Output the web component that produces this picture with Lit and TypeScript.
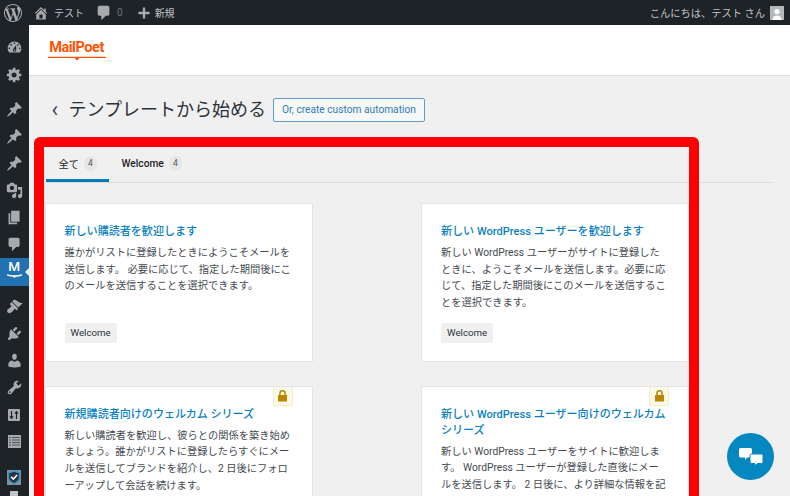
import { LitElement, html, css, svg } from "lit";
import { customElement } from "lit/decorators.js";

const P = {
  wp: "M20 10c0-5.51-4.49-10-10-10C4.48 0 0 4.49 0 10c0 5.52 4.48 10 10 10 5.51 0 10-4.48 10-10zM7.78 15.37L4.37 6.22c.55-.02 1.17-.08 1.17-.08.5-.06.44-1.13-.06-1.11 0 0-1.45.11-2.37.11-.18 0-.37 0-.58-.01C4.12 2.69 6.87 1.11 10 1.11c2.33 0 4.45.87 6.05 2.34-.68-.11-1.65.39-1.65 1.58 0 .74.45 1.36.9 2.1.35.61.55 1.36.55 2.46 0 1.49-1.4 5-1.4 5l-3.03-8.37c.54-.02.82-.17.82-.17.5-.05.44-1.25-.06-1.22 0 0-1.44.12-2.38.12-.87 0-2.33-.12-2.33-.12-.5-.03-.56 1.2-.06 1.22l.92.08 1.26 3.41zM17.41 10c.24-.64.74-1.87.43-4.25.7 1.29 1.05 2.71 1.05 4.25 0 3.29-1.73 6.24-4.4 7.78.97-2.59 1.94-5.2 2.92-7.78zM6.1 18.09C3.12 16.65 1.11 13.53 1.11 10c0-1.3.23-2.48.72-3.59C3.25 10.3 4.67 14.2 6.1 18.09zm4.03-6.63l2.58 6.98c-.86.29-1.76.45-2.71.45-.79 0-1.57-.11-2.29-.33.81-2.38 1.62-4.74 2.42-7.1z",
  home: "M16 8.5l1.53 1.53-1.06 1.06L10 4.62l-6.47 6.47-1.06-1.06L10 2.5l4 4v-2h2v4zm-6-2.46l6 5.99V18H4v-5.97zM12 17v-5H8v5h4z",
  comment: "M5 2h9c1.1 0 2 .9 2 2v7c0 1.1-.9 2-2 2h-2l-5 5v-5H5c-1.1 0-2-.9-2-2V4c0-1.1.9-2 2-2z",
  plus: "M17 8.5v3h-5.5V17h-3v-5.5H3v-3h5.5V3h3v5.5z",
  dash: "M3.76 16h12.48c1.1-1.37 1.76-3.11 1.76-5 0-4.42-3.58-8-8-8s-8 3.58-8 8c0 1.89.66 3.63 1.76 5zM10 4c.55 0 1 .45 1 1s-.45 1-1 1-1-.45-1-1 .45-1 1-1zM6 6c.55 0 1 .45 1 1s-.45 1-1 1-1-.45-1-1 .45-1 1-1zm8 0c.55 0 1 .45 1 1s-.45 1-1 1-1-.45-1-1 .45-1 1-1zm-5.37 5.55L12 7v6c0 1.1-.9 2-2 2s-2-.9-2-2c0-.57.24-1.08.63-1.45zM4 10c.55 0 1 .45 1 1s-.45 1-1 1-1-.45-1-1 .45-1 1-1zm12 0c.55 0 1 .45 1 1s-.45 1-1 1-1-.45-1-1 .45-1 1-1zm-5 3c0-.55-.45-1-1-1s-1 .45-1 1 .45 1 1 1 1-.45 1-1z",
  gear: "M18 12h-2.18c-.17.7-.44 1.35-.81 1.93l1.54 1.54-2.1 2.1-1.54-1.54c-.58.36-1.23.63-1.91.79V19H8v-2.18c-.68-.16-1.33-.43-1.91-.79l-1.54 1.54-2.12-2.12 1.54-1.54c-.36-.58-.63-1.23-.79-1.91H1V9.03h2.17c.16-.7.44-1.35.8-1.94L2.43 5.55l2.1-2.1 1.54 1.54c.58-.37 1.24-.64 1.93-.81V2h3v2.18c.68.16 1.33.43 1.91.79l1.54-1.54 2.12 2.12-1.54 1.54c.36.59.64 1.24.8 1.94H18V12zm-8.5 1.5c1.66 0 3-1.34 3-3s-1.34-3-3-3-3 1.34-3 3 1.34 3 3 3z",
  pin: "M10.44 3.02l1.82-1.82 6.36 6.35-1.83 1.82c-1.05-.68-2.48-.57-3.41.36l-.75.75c-.92.93-1.04 2.35-.35 3.41l-1.83 1.82-2.41-2.41-2.8 2.79c-.42.42-3.38 2.71-3.8 2.29s1.86-3.39 2.28-3.81l2.79-2.79L4.1 9.36l1.83-1.82c1.05.69 2.48.57 3.4-.36l.75-.75c.93-.92 1.05-2.35.36-3.41z",
  media: "M13 11V4c0-.55-.45-1-1-1h-1.67L9 1H5L3.67 3H2c-.55 0-1 .45-1 1v7c0 .55.45 1 1 1h10c.55 0 1-.45 1-1zM7 4.5c1.38 0 2.5 1.12 2.5 2.5S8.38 9.5 7 9.5 4.5 8.38 4.5 7 5.62 4.5 7 4.5zM14 6h5v10.5c0 1.38-1.12 2.5-2.5 2.5S14 17.88 14 16.5s1.12-2.5 2.5-2.5c.17 0 .34.02.5.05V9h-3V6zm-4 8.05V13h2v3.5c0 1.38-1.12 2.5-2.5 2.5S7 17.88 7 16.5 8.12 14 9.5 14c.17 0 .34.02.5.05z",
  page: "M6 15V2h10v13H6zm-1 1h8v2H3V5h2v11z",
  hammer: "M14.48 11.06L7.41 3.99l1.5-1.5c.5-.56 2.3-.47 3.51.32 1.21.8 1.43 1.28 2.91 2.1 1.18.64 2.45 1.26 4.45.85zm-.71.71L6.7 4.7 4.93 6.47c-.39.39-.39 1.02 0 1.41l1.06 1.06c.39.39.39 1.03 0 1.42-.6.6-1.43 1.11-2.21 1.69-.35.26-.7.53-1.01.84C1.43 13.23.64 15.74 2 17.1s3.87.57 5.22-.78c.31-.31.58-.66.84-1.01.58-.78 1.09-1.61 1.69-2.21.39-.39 1.03-.39 1.42 0l1.06 1.06c.39.39 1.02.39 1.41 0z",
  plug: "M13.11 4.36L9.87 7.6 8 5.73l3.24-3.24c.35-.34 1.05-.2 1.56.32.52.51.66 1.21.31 1.55zm-8 1.77l.91-1.12 9.01 9.01-1.19.84c-.71.71-2.63 1.16-3.82 1.16H6.14L4.9 17.26c-.59.59-1.54.59-2.12 0-.59-.58-.59-1.53 0-2.12l1.24-1.24v-3.88c0-1.13.4-3.19 1.09-3.89zm7.26 3.97l3.24-3.24c.34-.35 1.04-.21 1.55.31.52.51.66 1.21.31 1.55l-3.24 3.25z",
  user: "M10 9.25c-2.27 0-2.73-3.44-2.73-3.44C7 4.02 7.82 2 9.97 2c2.16 0 2.98 2.02 2.71 3.81 0 0-.41 3.44-2.68 3.44zm0 2.57L12.72 10c2.39 0 4.52 2.33 4.52 4.53v2.49s-3.65 1.13-7.24 1.13c-3.65 0-7.24-1.13-7.24-1.13v-2.49c0-2.25 1.94-4.48 4.47-4.48z",
  tool: "M16.68 9.77c-1.34 1.34-3.3 1.67-4.95.99l-5.41 6.52c-.99.99-2.59.99-3.58 0s-.99-2.59 0-3.57l6.52-5.42c-.68-1.65-.35-3.61.99-4.95 1.28-1.28 3.12-1.62 4.72-1.06l-2.89 2.89 2.82 2.82 2.86-2.87c.53 1.58.18 3.39-1.08 4.65zM3.81 16.21c.4.39 1.04.39 1.43 0 .4-.4.4-1.04 0-1.43-.39-.4-1.03-.4-1.43 0-.39.39-.39 1.03 0 1.43z",
};

const icon = (d: string, size = 17) => html`<svg width=${size} height=${size} viewBox="0 0 20 20" fill="currentColor" fill-rule="evenodd" aria-hidden="true">${svg`<path d=${d}></path>`}</svg>`;

const cards = [
  { title: "新しい購読者を歓迎します", body: "誰かがリストに登録したときにようこそメールを送信します。 必要に応じて、指定した期間後にこのメールを送信することを選択できます。", tag: "Welcome", lock: false },
  { title: "新しい WordPress ユーザーを歓迎します", body: "新しい WordPress ユーザーがサイトに登録したときに、ようこそメールを送信します。必要に応じて、指定した期間後にこのメールを送信することを選択できます。", tag: "Welcome", lock: false },
  { title: "新規購読者向けのウェルカム シリーズ", body: "新しい購読者を歓迎し、彼らとの関係を築き始めましょう。誰かがリストに登録したらすぐにメールを送信してブランドを紹介し、2 日後にフォローアップして会話を続けます。", tag: "Welcome", lock: true },
  { title: "新しい WordPress ユーザー向けのウェルカム シリーズ", body: "新しい WordPress ユーザーをサイトに歓迎します。 WordPress ユーザーが登録した直後にメールを送信します。 2 日後に、より詳細な情報を記載したメールを送信します。", tag: "Welcome", lock: true },
];

@customElement("app-root")
export class AppRoot extends LitElement {
  static styles = css`
    :host {
      display: block;
      width: 790px;
      height: 496px;
      overflow: hidden;
      position: relative;
      background: #f0f0f1;
      font-family: Roboto, "Noto Sans CJK JP", sans-serif;
      color: #2c3338;
      text-spacing-trim: space-all;
      line-break: loose;
    }
    .bar {
      height: 25px;
      background: #1d2327;
      color: #c3c4c7;
      display: flex;
      align-items: center;
      font-size: 10px;
      padding: 0 6px 0 4px;
      box-sizing: border-box;
    }
    .bar-item { display: flex; align-items: center; }
    .bar-icon { color: #a7aaad; display: flex; }
    .wp { margin-right: 11px; }
    .site { gap: 5px; margin-right: 11px; }
    .cmt { gap: 4px; margin-right: 13px; }
    .cmt span { color: #6f7478; }
    .cmt .bar-icon { color: #a7aaad; }
    .new { gap: 3px; }
    .bar-right { margin-left: auto; gap: 5px; font-size: 10.25px; }
    .avatar { width: 14px; height: 14px; background: #b4b6b8; display: block; }
    .layout { display: flex; height: 471px; }
    .side {
      width: 28.5px;
      flex: none;
      background: #1d2327;
      color: #a7aaad;
      display: flex;
      flex-direction: column;
      align-items: stretch;
      padding-top: 8.5px;
      box-sizing: border-box;
    }
    .nav { height: 27px; display: flex; align-items: center; justify-content: center; flex: none; }
    .sep { height: 8.5px; flex: none; }
    .sep.low { height: 7.5px; }
    .sep.end { height: 9px; }
    .active {
      background: #2271b1;
      color: #fff;
      position: relative;
      flex-direction: column;
      justify-content: flex-start;
      height: 27.5px;
      padding-top: 2px;
      box-sizing: border-box;
      font-weight: 500;
      font-size: 13.5px;
      line-height: 13px;
    }
    .active svg { display: block; margin-top: 1px; }
    .active::after {
      content: "";
      position: absolute;
      right: 0;
      top: 10px;
      border: 4px solid transparent;
      border-right-color: #f0f0f1;
      border-left-width: 0;
    }
    .peek { margin-top: -5px; }
    .main { flex: 1; min-width: 0; display: flex; flex-direction: column; }
    .top {
      height: 51px;
      flex: none;
      background: #fff;
      border-bottom: 1px solid #dcdcde;
      padding: 12px 0 0 19px;
      box-sizing: border-box;
    }
    .logo { display: inline-flex; flex-direction: column; align-items: center; color: #ff5301; }
    .logo b { font-size: 14.5px; line-height: 16px; font-weight: 700; letter-spacing: -.45px; }
    .logo svg { display: block; margin-top: 0; }
    .content { padding: 22px 17px 0; }
    .head { display: flex; align-items: center; height: 24px; padding-left: 6px; }
    .back { width: 17px; flex: none; font-size: 22px; line-height: 22px; color: #3c434a; }
    h1 { margin: 0; font-size: 18px; line-height: 24px; font-weight: 400; color: #2c3338; white-space: nowrap; }
    .btn {
      margin-left: 7px;
      height: 24px;
      width: 152px;
      box-sizing: border-box;
      border: 1px solid #5f9ec8;
      border-radius: 2px;
      background: #f6f7f7;
      color: #2f7db5;
      font: 400 10.2px/22px Roboto, "Noto Sans CJK JP", sans-serif;
      text-align: center;
      padding: 0;
    }
    .tabs {
      margin-top: 24px;
      height: 36px;
      border-bottom: 1px solid #dcdcde;
      display: flex;
      box-sizing: content-box;
    }
    .tab {
      height: 36px;
      box-sizing: border-box;
      display: flex;
      align-items: center;
      gap: 5px;
      font-size: 10.2px;
      color: #1e1e1e;
      padding-top: 1px;
    }
    .tab.on { width: 63px; padding-left: 13px; border-bottom: 3px solid #007cba; }
    .tab.w { margin-left: 13px; font-weight: 500; padding-bottom: 3px; }
    .count {
      width: 13px;
      height: 15px;
      border-radius: 7px;
      background: #e6e6e6;
      font-size: 8.5px;
      font-weight: 400;
      line-height: 14px;
      text-align: center;
      color: #50575e;
    }
    .grid {
      margin-top: 21px;
      display: grid;
      grid-template-columns: 266px 266px;
      column-gap: 110.5px;
      row-gap: 25.5px;
    }
    .card {
      position: relative;
      background: #fff;
      box-shadow: 0 0 0 1px #e4e4e6;
      padding: 20px 20.5px 18px 19px;
      display: flex;
      flex-direction: column;
      align-items: flex-start;
    }
    .card h3 { margin: 0 0 5px; font-size: 11.05px; line-height: 16px; font-weight: 500; color: #0a7fc0; }
    .card p { margin: 0; font-size: 10.25px; line-height: 16.6px; color: #444a50; }
    .tag {
      margin-top: auto;
      height: 20px;
      padding: 0 6px;
      background: #f0f0f1;
      border-radius: 2px;
      font-size: 9.7px;
      line-height: 20px;
      color: #2c3338;
    }
    .spacer { height: 12px; flex: none; }
    .lock {
      position: absolute;
      top: 0;
      right: 19px;
      width: 20px;
      height: 19px;
      box-sizing: border-box;
      background: #fcf9e8;
      border: 1px solid #f7ebc0;
      border-top: 0;
      border-radius: 0 0 2px 2px;
      color: #bd8600;
      display: flex;
      align-items: center;
      justify-content: center;
    }
    .frame {
      position: absolute;
      left: 34px;
      top: 137px;
      width: 665px;
      height: 400px;
      box-sizing: border-box;
      border: 10px solid #ff0000;
      border-radius: 6px;
      pointer-events: none;
    }
    .chat {
      position: absolute;
      left: 727px;
      top: 433px;
      width: 47px;
      height: 47px;
      border-radius: 50%;
      background: #0587bf;
      display: flex;
      align-items: center;
      justify-content: center;
    }
  `;

  render() {
    const top = [P.dash, P.gear];
    const posts = [P.pin, P.pin, P.pin, P.media, P.page, P.comment];
    const lower = [P.hammer, P.plug, P.user, P.tool];
    return html`
      <div class="bar">
        <div class="bar-item bar-icon wp">${icon(P.wp, 18)}</div>
        <div class="bar-item site"><span class="bar-icon">${icon(P.home, 16)}</span>テスト</div>
        <div class="bar-item cmt"><span class="bar-icon">${icon(P.comment, 18)}</span><span>0</span></div>
        <div class="bar-item new"><span class="bar-icon">${icon(P.plus, 16)}</span>新規</div>
        <div class="bar-item bar-right">こんにちは、テスト さん
          <svg class="avatar" viewBox="0 0 14 14" aria-hidden="true"><rect width="14" height="14" fill="#b4b6b8"></rect><circle cx="7" cy="5.6" r="2.6" fill="#fff"></circle><path d="M2.5 14c0-3.2 2-4.6 4.5-4.6s4.5 1.400 4.500 4.600z" fill="#fff"></path></svg>
        </div>
      </div>
      <div class="layout">
        <nav class="side">
          ${top.map((d) => html`<div class="nav">${icon(d)}</div>`)}
          <div class="sep"></div>
          ${posts.map((d) => html`<div class="nav">${icon(d)}</div>`)}
          <div class="nav active">M
            <svg width="17" height="6" viewBox="0 0 17 6" aria-hidden="true"><path d="M1 .8c4 1.600 11 1.600 15 0" stroke="#fff" stroke-width="1.400" fill="none"></path><path d="M6.800 2h3.400L8.500 4.200z" fill="#fff"></path></svg>
          </div>
          <div class="sep low"></div>
          ${lower.map((d) => html`<div class="nav">${icon(d)}</div>`)}
          <div class="nav">
            <svg width="12" height="12" viewBox="0 0 12 12" aria-hidden="true"><rect width="12" height="12" rx="1" fill="#a7aaad"></rect><path d="M3.500 2v7M1.900 7.300l1.600 2 1.600-2M8.500 10V3M6.900 4.700l1.600-2 1.600 2" fill="none" stroke="#1d2327" stroke-width="1.100"></path></svg>
          </div>
          <div class="nav">
            <svg width="13" height="13" viewBox="0 0 13 13" aria-hidden="true"><rect width="13" height="13" fill="#a7aaad"></rect><path d="M1 2.500h2M4 2.500h8M1 5h2M4 5h8M1 7.500h2M4 7.500h8M1 10h2M4 10h8" stroke="#3a4045" stroke-width=".8" fill="none"></path></svg>
          </div>
          <div class="sep end"></div>
          <div class="nav">
            <svg width="14" height="15" viewBox="0 0 14 15" aria-hidden="true"><rect width="14" height="15" fill="#8b8f93"></rect><path d="M7 1l5.500 1.800v5c0 2.800-3 4.800-5.500 6-2.500-1.200-5.500-3.200-5.500-6v-5z" fill="#2b3338" stroke="#2f95d6" stroke-width="1.400"></path><path d="M4 6.800l2.300 2.300 3.800-4" fill="none" stroke="#fff" stroke-width="1.500"></path></svg>
          </div>
          <div class="nav peek">
            <svg width="8" height="17" viewBox="0 0 8 17" aria-hidden="true"><path d="M0 0h8v17H0z" fill="#c3c4c7"></path></svg>
          </div>
        </nav>
        <main class="main">
          <div class="top">
            <div class="logo">
              <b>MailPoet</b>
              <svg width="58" height="6" viewBox="0 0 58 6" aria-hidden="true"><path d="M.5 1.400h57" stroke="#ff5301" stroke-width="1.300" stroke-linecap="round" fill="none"></path><path d="M26.500 1.800h5L29 4.800z" fill="#ff5301"></path></svg>
            </div>
          </div>
          <div class="content">
            <div class="head">
              <span class="back">‹</span>
              <h1>テンプレートから始める</h1>
              <button class="btn">Or, create custom automation</button>
            </div>
            <div class="tabs">
              <div class="tab on">全て<span class="count">4</span></div>
              <div class="tab w">Welcome<span class="count">4</span></div>
            </div>
            <div class="grid">
              ${cards.map((c) => html`
                <article class="card">
                  ${c.lock ? html`<span class="lock"><svg width="11" height="12" viewBox="0 0 11 12" aria-hidden="true"><path d="M1 5h1.200V3.400a3.300 3.300 0 0 1 6.600 0V5H10v6.500H1zM3.700 5h3.600V3.400a1.800 1.800 0 0 0-3.600 0z" fill="currentColor" fill-rule="evenodd"></path></svg></span>` : ""}
                  <h3>${c.title}</h3>
                  <p>${c.body}</p>
                  <div class="spacer"></div>
                  <span class="tag">${c.tag}</span>
                </article>`)}
            </div>
          </div>
        </main>
      </div>
      <div class="frame"></div>
      <div class="chat">
        <svg width="24" height="18" viewBox="0 0 24 18" aria-hidden="true"><path d="M1.500 0h10a1.500 1.500 0 0 1 1.500 1.500v6.500a1.500 1.500 0 0 1-1.500 1.500H8L6 12V9.500H1.500A1.500 1.500 0 0 1 0 8V1.500A1.500 1.500 0 0 1 1.500 0z" fill="#fff"></path><path d="M12.500 6h10a1.500 1.500 0 0 1 1.500 1.500V14a1.500 1.500 0 0 1-1.500 1.500H18.500L16 18v-2.500h-3.500A1.500 1.500 0 0 1 11 14V7.500A1.500 1.500 0 0 1 12.500 6z" fill="#fff" stroke="#0587bf" stroke-width="1"></path></svg>
      </div>
    `;
  }
}
